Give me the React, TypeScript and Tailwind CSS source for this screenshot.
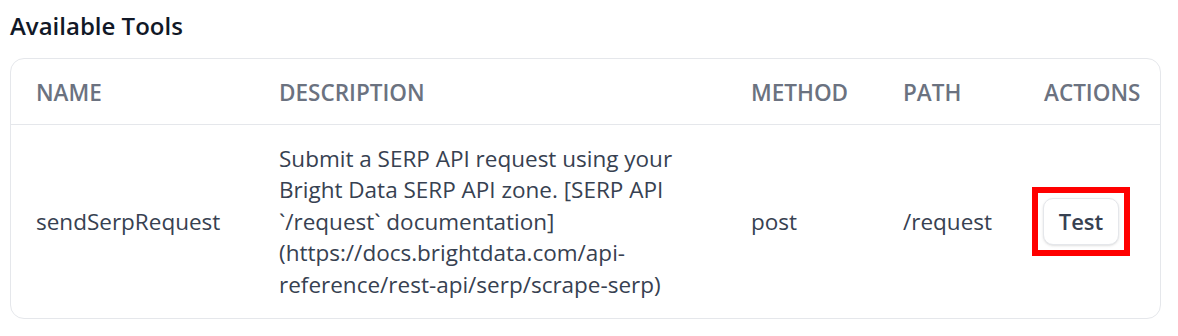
export default function App() {
  return (
    <div className="bg-white min-h-screen px-[10px] pt-[10px]">
      <div className="font-['Open_Sans','Noto_Sans',sans-serif]">
        <h2 className="text-[24px] leading-[32px] font-semibold text-[#111827] mb-[16px]">
          Available Tools
        </h2>

        <div className="w-[1151px] rounded-[14px] border border-[#e5e7eb] overflow-hidden">
          <table className="w-full table-fixed border-collapse">
            <colgroup>
              <col className="w-[243px]" />
              <col className="w-[472px]" />
              <col className="w-[152px]" />
              <col className="w-[141px]" />
              <col />
            </colgroup>
            <thead>
              <tr className="border-b border-[#e5e7eb]">
                <th className="h-[65px] px-[25px] pt-[4px] text-left text-[22.5px] font-semibold uppercase text-[#6b7280]">Name</th>
                <th className="h-[65px] px-[25px] pt-[4px] text-left text-[22.5px] font-semibold uppercase text-[#6b7280]">Description</th>
                <th className="h-[65px] px-[25px] pt-[4px] text-left text-[22.5px] font-semibold uppercase text-[#6b7280]">Method</th>
                <th className="h-[65px] px-[25px] pt-[4px] text-left text-[22.5px] font-semibold uppercase text-[#6b7280]">Path</th>
                <th className="h-[65px] px-[25px] pt-[4px] text-left text-[22.5px] font-semibold uppercase text-[#6b7280]">Actions</th>
              </tr>
            </thead>
            <tbody>
              <tr className="text-[#374151]">
                <td className="h-[194px] px-[25px] align-middle text-[22.5px] leading-[31.5px]">sendSerpRequest</td>
                <td className="h-[194px] px-[25px] align-middle text-[22.5px] leading-[31.5px]">
                  Submit a SERP API request using your Bright Data SERP API zone. [SERP API `/request` documentation](https://docs.brightdata.com/api-reference/rest-api/serp/scrape-serp)
                </td>
                <td className="h-[194px] px-[25px] align-middle text-[22.5px] leading-[31.5px]">post</td>
                <td className="h-[194px] px-[25px] align-middle text-[22.5px] leading-[31.5px]">/request</td>
                <td className="h-[194px] px-[24px] align-middle">
                  <div className="relative inline-block align-middle">
                    <button className="h-[47px] w-[76px] rounded-[10px] border border-[#e5e7eb] bg-white text-[22px] font-semibold text-[#374151] shadow-sm">
                      Test
                    </button>
                    <span className="pointer-events-none absolute -inset-[11px] border-[6px] border-[#ff0000]" />
                  </div>
                </td>
              </tr>
            </tbody>
          </table>
        </div>
      </div>
    </div>
  );
}
